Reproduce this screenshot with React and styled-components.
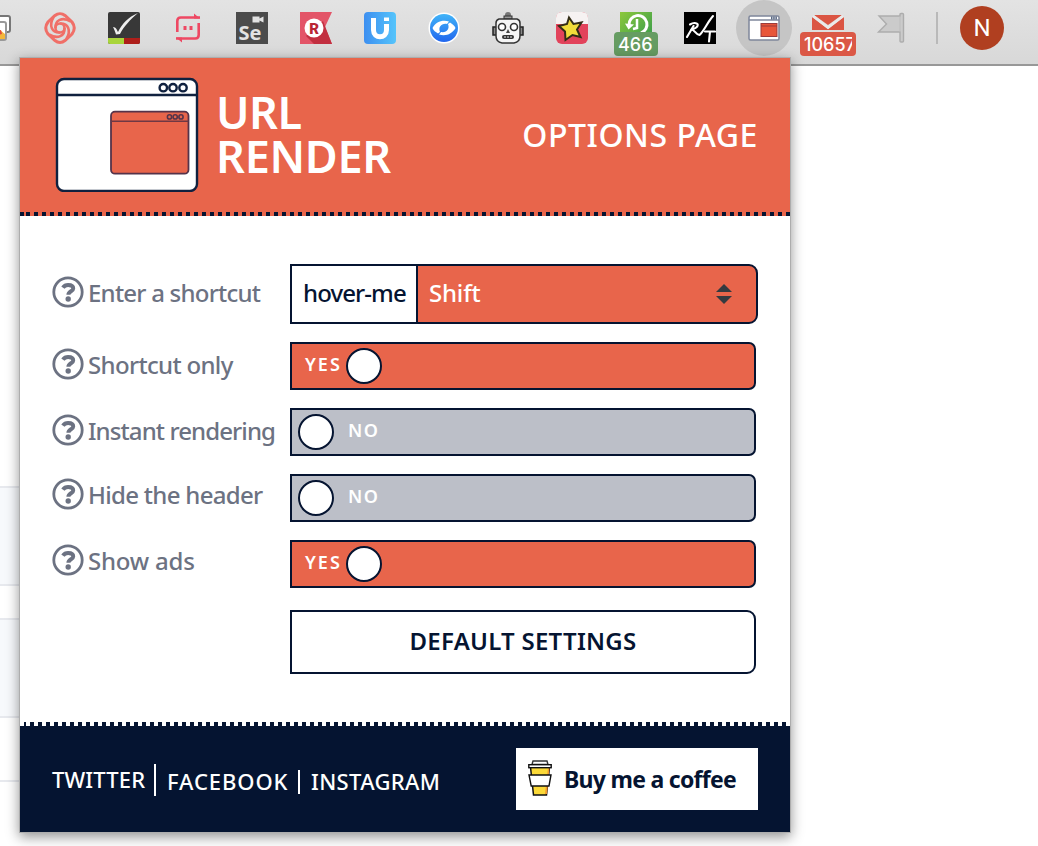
import React from "react";
import styled, { createGlobalStyle } from "styled-components";

const NAVY = "#051431";
const CORAL = "#e8654b";
const SLATE = "#6c7282";

const Global = createGlobalStyle`
  *, *::before, *::after { box-sizing: border-box; }
  body { margin: 0; overflow: hidden; background: #fff; font-family: "Noto Sans", sans-serif; }
`;
const Screen = styled.div`
  position: relative; width: 1038px; height: 846px; overflow: hidden; background: #fff;
`;
const Toolbar = styled.div`
  height: 66px; display: flex; align-items: flex-start;
  background: linear-gradient(#e3e3e3, #d8d8d8); border-bottom: 2px solid #989898;
`;
const Slots = styled.div`display: flex; margin-left: -36px; flex: none;`;
const Slot = styled.div`
  position: relative; width: 64px; height: 56px; flex: none;
  display: flex; align-items: center; justify-content: center;
`;
const ActiveDisc = styled.div`
  width: 56px; height: 56px; border-radius: 50%; background: #c5c5c5;
  display: flex; align-items: center; justify-content: center;
`;
const Badge = styled.div`
  position: absolute; top: 32px; left: 50%; transform: translateX(-50%);
  width: ${p => p.$w}px; height: 24px; border-radius: 4px; background: ${p => p.$bg};
  color: #fff; font: 500 18px/24px Inter, sans-serif;
  padding: 1px ${p => p.$pad}px 0; overflow: hidden; white-space: nowrap;
`;
const BadgeClip = styled.div`overflow: hidden;`;
const Divider = styled.div`width: 2px; height: 32px; margin: 12px 22px 0 12px; background: #b9b9b9;`;
const Avatar = styled.div`
  width: 44px; height: 44px; margin-top: 6px; border-radius: 50%; background: #b03f20; color: #fff;
  font: 400 24px/45px Roboto, sans-serif; text-align: center;
`;
const PageEdge = styled.div`padding-top: 420px; width: 40px;`;
const EdgeBlock = styled.div`
  height: ${p => p.$h}px; background: ${p => p.$bg || "#fff"}; border-top: 2px solid #e7e9ee;
`;

const Popup = styled.div`
  position: absolute; left: 20px; top: 58px; width: 770px; height: 774px;
  display: flex; flex-direction: column; background: #fff;
  box-shadow: 0 0 0 1px #adadad, 0 4px 12px 1px rgba(0,0,0,.42);
`;
const Header = styled.header`
  height: 154px; background: ${CORAL}; color: #fff; padding: 0 32px 2px 35px;
  display: flex; align-items: center;
`;
const Stitch = styled.div`
  height: 4px; flex: none;
  background:
    linear-gradient(90deg, ${p => p.$dot} 4px, ${p => p.$base} 4px) 0 0 / 6px 4px no-repeat,
    repeating-linear-gradient(90deg, ${p => p.$dot} 0 4px, ${p => p.$base} 4px 8px) 6px 0 / 770px 4px no-repeat;
`;
const Title = styled.h1`
  margin: 0 0 0 17px; font-weight: 600; font-size: 45px; line-height: 44px;
  display: flex; flex-direction: column;
`;
const Track = styled.span`letter-spacing: ${p => p.$t}px; white-space: nowrap;`;
const Subtitle = styled.div`
  margin-left: auto; padding-top: 1px; font-size: 32px; line-height: 40px; white-space: nowrap; font-weight: 500;
`;

const Form = styled.main`
  flex: 1; padding: 48px 0 0 32px; display: flex; flex-direction: column; gap: 18px;
`;
const Row = styled.div`display: flex; align-items: center; height: ${p => p.$h || 48}px; flex: none;`;
const Label = styled.div`
  width: 238px; flex: none; display: flex; align-items: center; gap: 4px;
  padding-bottom: ${p => p.$lift}px; color: ${SLATE};
  font-size: 24px; line-height: 32px; font-weight: 500; white-space: nowrap;
`;
const LabelText = styled.div`padding-top: 2px;`;
const Select = styled.div`
  width: 468px; height: 60px; border: 2px solid ${NAVY}; border-radius: 0 9px 9px 0;
  display: flex; overflow: hidden; background: ${CORAL}; font-size: 24px; line-height: 54px; font-weight: 500;
`;
const Prefix = styled.div`
  width: 126px; padding-left: 11px; background: #fff; color: ${NAVY}; border-right: 2px solid ${NAVY}; white-space: nowrap;
`;
const Value = styled.div`
  flex: 1; display: flex; align-items: center; justify-content: space-between;
  padding: 0 24px 0 11px; color: #fff;
`;
const ValueText = styled.div`height: 56px;`;
const Toggle = styled.div`
  width: 466px; height: 48px; border: 2px solid ${NAVY}; border-radius: 0 7px 7px 0;
  display: flex; align-items: center; background: ${p => (p.$on ? CORAL : "#bcbfc8")};
  padding-left: ${p => (p.$on ? 13 : 6)}px;
`;
const Knob = styled.div`
  width: 36px; height: 36px; border-radius: 50%; background: #fff; border: 2px solid ${NAVY}; flex: none;
`;
const State = styled.div`
  width: 41px; flex: none; color: #fff;
  font-size: 18px; line-height: 24px; font-weight: 600; letter-spacing: ${p => (p.$on ? 2 : 1.6)}px;
  margin-left: ${p => (p.$on ? 0 : 14)}px; padding-bottom: 5px;
`;
const DefaultButton = styled.button`
  margin: 4px 0 0 238px; width: 466px; height: 64px; border: 2px solid ${NAVY}; border-radius: 0 9px 9px 0;
  background: #fff; color: ${NAVY}; font: 600 24px/32px "Noto Sans", sans-serif; padding: 0 0 2px;
`;
const Footer = styled.footer`
  height: 106px; flex: none; background: ${NAVY}; color: #fff;
  display: flex; align-items: center; padding: 0 32px; font-weight: 500;
`;
const Links = styled.nav`display: flex; align-items: center; font-size: 22px; line-height: 32px; padding-top: 2px;`;
const Link = styled.a`
  padding: ${p => p.$drop || 0}px 0 2px; width: ${p => p.$w}px; white-space: nowrap;
`;
const Bar = styled.i`width: 2px; height: ${p => p.$h}px; background: #fff; margin: ${p => p.$m};`;
const Coffee = styled.a`
  margin-left: auto; width: 242px; height: 62px; background: #fff; color: ${NAVY};
  display: flex; align-items: center; padding: 0 0 1px 12px; gap: 12px;
  font-size: 23px; line-height: 32px; font-weight: 700; white-space: nowrap;
`;

const Ico = ({ children, w = 32, h = 32 }) => (
  <svg width={w} height={h} viewBox={`0 0 ${w} ${h}`} fill="none">{children}</svg>
);

const TabsIcon = () => (
  <Ico>
    <rect x="10" y="4" width="20" height="16" rx="2" fill="#fff" stroke="#777" strokeWidth="2" />
    <rect x="4" y="10" width="22" height="18" rx="2" fill="#fff" stroke="#999" strokeWidth="2" />
    <path d="M14 27 20 18l5 4v5Z" fill="#f4b73c" /><path d="m17 19 4-1 1 4-4 1Z" fill="#e34b3a" />
  </Ico>
);
const KnotIcon = () => (
  <Ico>
    <g stroke="#f06f68" strokeWidth="3">
      <path d="M11 3.500C14 1 18 1 21 3.500L28 10c3 4 3 8 0 12l-7 6.500c-3 2.500-7 2.500-10 0L4 22c-3-4-3-8 0-12Z" />
      <circle cx="16" cy="16" r="4.500" strokeWidth="2.600" />
      {[0, 90, 180, 270].map(a => (
        <path key={a} d="M11.500 16C11 8 18 4.500 27 9.500" transform={`rotate(${a} 16 16)`} strokeWidth="2.600" />
      ))}
    </g>
  </Ico>
);
const CheckIcon = () => (
  <Ico>
    <rect width="32" height="32" rx="2" fill="#383838" />
    <path d="M0 26h16v6H2q-2 0-2-2Z" fill="#a9d53b" /><path d="M16 26h16v4q0 2-2 2H16Z" fill="#ae1f1a" />
    <path d="M5 15c3 0 4 3 5 5C14 12 20 5 30 1 22 8 16 14 12 22l-4 .5C7 19 6 17 5 15Z" fill="#eee" />
  </Ico>
);
const FaceLoopIcon = () => (
  <Ico>
    <g stroke="#ee4863" strokeWidth="2.600">
      <path d="M5.300 20V9q0-3.500 3.500-3.500H28M26.700 11v12q0 3.500-3.500 3.500H4" />
      <path d="M13 14v4M19 14v4" strokeWidth="3" />
    </g>
    <path d="m22 1.500 6 5h-6ZM10 30.500l-6-5h6Z" fill="#ee4863" />
  </Ico>
);
const SeText = styled.text`font: 700 20px "Noto Sans", sans-serif; fill: #e2e2e2;`;
const SeIcon = () => (
  <Ico>
    <rect width="32" height="32" fill="#4b4b4b" />
    <path d="M16.500 4.500h7v2l4-2v6l-4-2v2h-7Z" fill="#e2e2e2" /><SeText x="2.500" y="28">Se</SeText>
  </Ico>
);
const RText = styled.text`font: 900 15px Roboto, sans-serif; fill: #b92634;`;
const RIcon = () => (
  <Ico>
    <path d="M0 0h32L25 15l7 17H0Z" fill="#e35568" /><path d="M6 24 23 9l9 23H14Z" fill="#c22f40" />
    <circle cx="14" cy="16" r="9.500" fill="#fff" /><RText x="9.200" y="21.500">R</RText>
  </Ico>
);
const Gradients = () => (
  <defs>
    <linearGradient id="uBlue"><stop stopColor="#3d8ff0" /><stop offset="1" stopColor="#55c4fb" /></linearGradient>
    <linearGradient id="eyeBlue" x2="0" y2="1"><stop stopColor="#41b4f8" /><stop offset="1" stopColor="#2166ee" /></linearGradient>
    <linearGradient id="green" y2="1"><stop stopColor="#8dc83d" /><stop offset="1" stopColor="#30984c" /></linearGradient>
  </defs>
);
const UIcon = () => (
  <Ico><Gradients /><rect width="32" height="32" rx="4" fill="url(#uBlue)" />
    <path d="M9.500 6v12c0 9 13 9 13 0v-6" stroke="#fff" strokeWidth="5" /><path d="M20 5.500h5V9h-5Z" fill="#fff" /></Ico>
);
const EyeIcon = () => (
  <Ico><Gradients /><circle cx="16" cy="16" r="15.500" fill="#fff" /><circle cx="16" cy="16" r="14" fill="url(#eyeBlue)" />
    <path d="M4.500 16C8 10 14 7.500 21 9.500L19 12c-5.500-1-9 3-7 8l-2 1.500C7.500 20 5.500 18.500 4.500 16Z" fill="#fff" />
    <path d="M27.500 16c-3.500 6-9.500 8.500-16.500 6.500l2-2.500c5.500 1 9-3 7-8l2-1.500c2.500 1.500 4.500 3 5.500 5.500Z" fill="#fff" /></Ico>
);
const RobotIcon = () => (
  <Ico>
    <circle cx="16" cy="3" r="3" fill="#777" /><rect x="12" y="4" width="8" height="3" fill="#999" stroke="#333" />
    <path d="M4 15H1v8h3M28 15h3v8h-3" fill="#888" stroke="#222" strokeWidth="1.500" />
    <path d="M7 7h18q3 1 3 4v13q0 6-6 7H10q-6-1-6-7V11q0-3 3-4Z" fill="#f5f5f5" stroke="#333" strokeWidth="1.500" />
    <circle cx="10" cy="15" r="3.500" stroke="#333" strokeWidth="1.600" fill="#fff" /><circle cx="22" cy="15" r="3.500" stroke="#333" strokeWidth="1.600" fill="#fff" />
    <path d="m16 17-2 4h4Z" fill="#444" /><rect x="10" y="23" width="12" height="4" rx="2" fill="#333" />
    <path d="M13 24v2M16 24v2M19 24v2" stroke="#eee" />
  </Ico>
);
const StarIcon = () => (
  <Ico>
    <rect width="32" height="32" rx="6" fill="#e2435b" /><path d="M0 12V6q0-6 6-6h20q6 0 6 6v6Z" fill="#f6f2f2" />
    <path d="m13 5.500 4.500 6.500 8-1.500-4.500 7 3.500 7.500-8-2-7 5-.5-8.500L3 14l8-2Z" fill="#f1dc3a" stroke="#332d17" strokeWidth="2" />
  </Ico>
);
const RestoreIcon = () => (
  <Ico><Gradients /><rect width="32" height="32" fill="url(#green)" />
    <path d="M9 13A9 9 0 1 1 21 21" stroke="#fff" strokeWidth="3" /><path d="m5 11.500 9 1-5.500 5Z" fill="#fff" /><path d="M17 7v9l-4 1" stroke="#fff" strokeWidth="2.500" /></Ico>
);
const ScriptIcon = () => (
  <Ico><rect width="32" height="32" fill="#000" />
    <g stroke="#fff" strokeWidth="2.100" strokeLinecap="round" strokeLinejoin="round">
      <path d="M6 12.500c4-2.500 9-1.500 7.500 1.500-1 2-4 3-6 3.500 3 0 4 5 8 5.500C20 19 23 11 29 4" />
      <path d="M9.500 14 3 25M21 19.500h10M26 19.500l-1 10" />
    </g></Ico>
);
const WindowIcon = () => (
  <Ico>
    <rect x="1" y="4" width="30" height="24" rx="1.500" fill="#fff" stroke="#7f879b" strokeWidth="1.500" /><path d="M1 8h30" stroke="#7f879b" strokeWidth="1.500" />
    <path d="M23 6h6" stroke="#596883" strokeWidth="3" strokeDasharray="1.500 .7" />
    <rect x="13" y="11.500" width="16" height="13" fill="#e8563a" stroke="#9b3b3b" /><path d="M13 14h16" stroke="#9b3b3b" />
  </Ico>
);
const MailIcon = () => (
  <Ico><path d="M2 3h28L16 13Z" fill="#db5543" /><path d="M0 5v13h32V5L16 17Z" fill="#db5543" /><path d="m1 4 15 11.500L31 4" stroke="#eaeaea" strokeWidth="2.600" /></Ico>
);
const FlagIcon = () => (
  <Ico><path d="M3 4h21V2.500q0-1 1-1h1.500q1 0 1 1V29q0 1-1 1H25q-1 0-1-1V20H2.500l8-8Z" fill="#cbcbcb" stroke="#adadad" strokeWidth="1.400" /><path d="M24 4v16" stroke="#bdbdbd" /></Ico>
);

const Logo = () => (
  <Ico w={144} h={116}>
    <rect x="2" y="3" width="140" height="112" rx="7" fill="#fff" stroke="#10213f" strokeWidth="2.400" />
    <path d="M2 19h140" stroke="#10213f" strokeWidth="2.400" />
    {[108.300, 118, 128].map(x => <circle key={x} cx={x} cy="11.700" r="3.700" stroke="#10213f" strokeWidth="2.400" />)}
    <rect x="56" y="35.700" width="77.500" height="62" rx="4" fill={CORAL} stroke="#55334a" strokeWidth="1.800" />
    <path d="M56 45.200h77.500" stroke="#6f3844" strokeWidth="1.600" />
    {[114.500, 120.200, 126].map(x => <circle key={x} cx={x} cy="40.900" r="2.100" stroke="#55334a" strokeWidth="1.600" />)}
  </Ico>
);
const HelpIcon = () => (
  <Ico>
    <circle cx="16" cy="16" r="14.200" stroke={SLATE} strokeWidth="2.800" />
    <path d="M10.900 11.600c1.300-1.800 3-2.600 5.200-2.600 3 0 5.100 1.300 5.100 3.500 0 3-4.800 2.700-4.800 6.300" stroke={SLATE} strokeWidth="4" />
    <circle cx="16.200" cy="23" r="2.700" fill={SLATE} />
  </Ico>
);
const Carets = () => <Ico w={16} h={20}><path d="m8 0 8 8H0ZM8 20l8-8H0Z" fill="#343a40" /></Ico>;
const CupIcon = () => (
  <Ico w={24} h={38}>
    <path d="m2.500 7 3 28h13l3-28Z" fill="#fbd938" stroke="#111" strokeWidth="1.500" />
    <path d="M20 8h1.500L19 34h-2Z" fill="#f39a2b" />
    <path d="M4 4.500 5 1h14l1 3.500Z" fill="#fff" stroke="#333" strokeWidth="1.400" />
    <rect x=".8" y="4.700" width="22.400" height="3" fill="#fff" stroke="#111" strokeWidth="1.400" />
    <path d="M1 15h22l-2 11H3.200Z" fill="#fff" stroke="#111" strokeWidth="1.400" />
  </Ico>
);

const OPTIONS = [
  { text: "Shortcut only", on: true, lift: 4, track: -0.67 },
  { text: "Instant rendering", on: false, lift: 4, track: -0.9 },
  { text: "Hide the header", on: false, lift: 8, track: -0.7 },
  { text: "Show ads", on: true, lift: 8, track: -0.2 },
];

export default function App() {
  return (
    <Screen>
      <Global />
      <Toolbar>
        <Slots>
          <Slot><TabsIcon /></Slot><Slot><KnotIcon /></Slot><Slot><CheckIcon /></Slot><Slot><FaceLoopIcon /></Slot>
          <Slot><SeIcon /></Slot><Slot><RIcon /></Slot><Slot><UIcon /></Slot><Slot><EyeIcon /></Slot>
          <Slot><RobotIcon /></Slot><Slot><StarIcon /></Slot>
          <Slot><RestoreIcon /><Badge $w={44} $bg="#669c62" $pad={4}>466</Badge></Slot>
          <Slot><ScriptIcon /></Slot>
          <Slot><ActiveDisc><WindowIcon /></ActiveDisc></Slot>
          <Slot><MailIcon /><Badge $w={56} $bg="#db5846" $pad={4}><BadgeClip>10657</BadgeClip></Badge></Slot>
          <Slot><FlagIcon /></Slot>
        </Slots>
        <Divider />
        <Avatar>N</Avatar>
      </Toolbar>
      <PageEdge>
        <EdgeBlock $h={98} $bg="#f7f9fc" /><EdgeBlock $h={34} /><EdgeBlock $h={98} $bg="#f7f9fc" />
        <EdgeBlock $h={64} /><EdgeBlock $h={60} />
      </PageEdge>
      <Popup>
        <Header>
          <Logo />
          <Title><Track $t={-0.5}>URL</Track><Track $t={-0.3}>RENDER</Track></Title>
          <Subtitle><Track $t={0.55}>OPTIONS PAGE</Track></Subtitle>
        </Header>
        <Stitch $dot={NAVY} $base={CORAL} />
        <Form>
          <Row $h={60}>
            <Label $lift={4}><HelpIcon /><LabelText><Track $t={-0.77}>Enter a shortcut</Track></LabelText></Label>
            <Select>
              <Prefix><Track $t={-0.9}>hover-me</Track></Prefix>
              <Value><ValueText><Track $t={-0.2}>Shift</Track></ValueText><Carets /></Value>
            </Select>
          </Row>
          {OPTIONS.map(o => (
            <Row key={o.text}>
              <Label $lift={o.lift}><HelpIcon /><LabelText><Track $t={o.track}>{o.text}</Track></LabelText></Label>
              <Toggle $on={o.on}>
                {o.on ? <><State $on>YES</State><Knob /></> : <><Knob /><State>NO</State></>}
              </Toggle>
            </Row>
          ))}
          <DefaultButton><Track $t={0.25}>DEFAULT SETTINGS</Track></DefaultButton>
        </Form>
        <Stitch $dot="#fff" $base={NAVY} />
        <Footer>
          <Links>
            <Link $w={92}><Track $t={0.15}>TWITTER</Track></Link>
            <Bar $h={32} $m="0 11px 0 10px" />
            <Link $w={121} $drop={4}><Track $t={0.9}>FACEBOOK</Track></Link>
            <Bar $h={24} $m="4px 11px 0 10px" />
            <Link $w={130} $drop={4}><Track $t={0.35}>INSTAGRAM</Track></Link>
          </Links>
          <Coffee><CupIcon /><Track $t={-0.72}>Buy me a coffee</Track></Coffee>
        </Footer>
      </Popup>
    </Screen>
  );
}
